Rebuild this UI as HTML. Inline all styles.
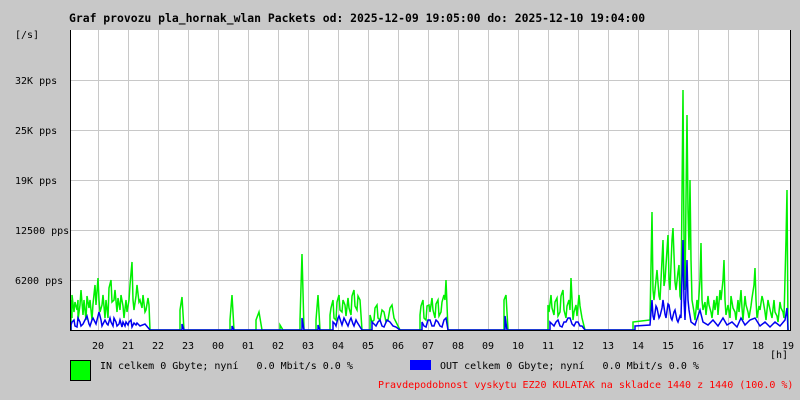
<html><head><style>
body{margin:0;width:800px;height:400px;background:#c8c8c8;font-family:"DejaVu Sans Mono","Liberation Mono",monospace;font-size:10px;color:#000;position:relative;overflow:hidden}
.t{position:absolute;white-space:pre}
</style></head><body>
<div class="t" style="left:69px;top:11px;font-weight:bold;font-size:11.4px">Graf provozu pla_hornak_wlan Packets od: 2025-12-09 19:05:00 do: 2025-12-10 19:04:00</div>
<div class="t" style="left:15px;top:30px">[/s]</div>
<div class="t" style="left:15px;top:76px">32K pps</div>
<div class="t" style="left:15px;top:126px">25K pps</div>
<div class="t" style="left:15px;top:176px">19K pps</div>
<div class="t" style="left:15px;top:226px">12500 pps</div>
<div class="t" style="left:15px;top:276px">6200 pps</div>
<svg style="position:absolute;left:0;top:0" width="800" height="400">
<rect x="70" y="30" width="720" height="300" fill="#fff"/>
<g stroke="#c8c8c8" stroke-width="1">
<path d="M98.5 30V330M128.5 30V330M158.5 30V330M188.5 30V330M218.5 30V330M248.5 30V330M278.5 30V330M308.5 30V330M338.5 30V330M368.5 30V330M398.5 30V330M428.5 30V330M458.5 30V330M488.5 30V330M518.5 30V330M548.5 30V330M578.5 30V330M608.5 30V330M638.5 30V330M668.5 30V330M698.5 30V330M728.5 30V330M758.5 30V330"/>
<path d="M70 80.5H790M70 130.5H790M70 180.5H790M70 230.5H790M70 280.5H790"/>
</g>
<path fill="none" stroke="#00f000" stroke-width="1.5" d="M71 330V300L72 318V295L74 312L75 302L77 310L78 300V320L80 305L81 290L83 315L84 300L86 320L87 296L89 308L90 300L92 320L93 304L95 285L96 305L98 278L99 300L100 312L102 305L103 295L105 318L106 300L108 318L109 288L111 280L112 302L114 300L115 290L117 312L118 298L120 310L121 295L123 306L124 318L126 300L127 312L129 300L130 285L132 262L133 300L134 310L136 296L137 285L139 302L140 300L142 308L143 295L145 312L146 310L148 298L149 305L150 330H180V310L182 297L184 330H230V320L232 295L234 330H256V320L259 312L262 330H280V325L283 330H300V320L302 254L304 330H316V320L318 295L320 330H330V315L331 308L333 300L334 318L336 320L337 302L339 295L340 310L342 312L343 300L345 305L346 316L348 298L349 308L351 315L352 296L354 290L355 306L357 310L358 296L360 300L362 330H370V315L372 322L374 320L375 308L377 305L378 318L380 320L382 310L384 312L386 322L388 320L390 308L392 305L394 318L396 322L400 330H420V315L421 306L423 300L424 318L426 320L427 306L429 305L430 312L432 298L433 310L435 318L436 304L438 300L439 316L441 312L442 302L444 295L445 300L446 280L448 330H504V300L506 295L508 330H548V305L549 312L551 295L552 308L554 315L555 302L557 298L558 316L560 312L561 296L563 290L564 310L566 318L567 306L569 300L570 310L571 278L573 320L574 312L576 305L577 316L579 295L580 306L582 318L585 330H633V322L650 320L652 212L653 290L654 300L656 280L657 270L659 296L660 300L662 260L663 240L664 286L665 280L667 250L668 235L669 280L670 290L672 240L673 228L675 282L676 290L678 272L679 265L680 296L681 300L683 90L684 240L685 290L686 200L687 115L688 210L689 250L690 180L691 260L692 300L694 312L695 320L697 300L698 310L700 280L701 243L702 300L703 310L705 302L706 315L708 296L709 305L711 312L712 318L714 300L715 310L717 296L718 315L720 290L721 300L723 280L724 260L725 300L726 315L728 305L730 318L731 296L733 308L735 312L736 320L738 300L739 312L740 302L741 290L742 308L743 320L745 296L746 305L748 312L749 318L751 306L752 298L754 285L755 268L756 300L757 318L759 306L760 310L762 296L763 300L765 312L766 320L768 300L769 305L771 314L772 318L774 300L775 312L777 316L778 322L780 302L781 308L783 312L784 318L786 240L787 190L788 330"/>
<path fill="none" stroke="#0000f0" stroke-width="1.5" d="M71 330V325L72 322L74 320L75 326L77 327L78 318L80 322L81 326L83 324L84 322L86 318L87 316L89 324L90 326L92 320L93 318L95 322L96 324L98 316L99 312L101 320L102 326L104 322L105 320L107 324L108 325L110 318L111 322L113 326L114 318L116 322L117 326L119 324L120 320L122 327L123 322L125 326L126 322L128 325L129 322L131 320L132 327L134 323L136 325L137 323L140 326L145 324L150 330H182V324L184 330H232V326L234 330H302V318L304 330H318V325L320 330H333V322L335 324L336 326L338 318L339 316L341 322L342 325L344 318L345 320L347 324L348 326L350 320L351 318L353 324L354 326L356 320L357 322L362 330H372V322L374 324L376 326L378 322L380 320L382 326L384 327L387 320L390 322L393 326L396 327L400 330H422V322L424 326L426 327L428 320L430 320L432 326L434 326L436 320L438 322L440 326L442 327L444 320L446 318L448 330H505V316L507 330H550V322L552 324L554 326L556 322L558 320L560 326L562 327L564 322L566 322L568 318L570 318L572 324L574 326L576 322L578 322L580 326L582 326L585 330H635V326L650 325L652 300L653 316L654 320L656 306L657 308L659 318L660 316L662 308L663 300L665 314L666 318L668 304L669 305L671 318L672 320L674 312L675 310L677 320L678 322L680 316L681 318L683 240L684 300L685 320L686 290L687 260L688 300L689 310L691 322L695 325L698 316L700 310L703 322L708 325L713 320L718 326L723 318L727 325L732 322L737 327L741 318L745 325L750 320L755 318L760 326L765 322L770 327L775 322L780 326L785 320L787 308L788 330"/>
<path d="M70.5 30V330.5H790.5V30" fill="none" stroke="#000" stroke-width="1"/>
<rect x="70.5" y="360.5" width="20" height="20" fill="#00ff00" stroke="#000"/>
<rect x="410" y="360" width="21" height="10" fill="#0000ff"/>
</svg>
<div class="t" style="left:92px;top:341px">20</div>
<div class="t" style="left:122px;top:341px">21</div>
<div class="t" style="left:152px;top:341px">22</div>
<div class="t" style="left:182px;top:341px">23</div>
<div class="t" style="left:212px;top:341px">00</div>
<div class="t" style="left:242px;top:341px">01</div>
<div class="t" style="left:272px;top:341px">02</div>
<div class="t" style="left:302px;top:341px">03</div>
<div class="t" style="left:332px;top:341px">04</div>
<div class="t" style="left:362px;top:341px">05</div>
<div class="t" style="left:392px;top:341px">06</div>
<div class="t" style="left:422px;top:341px">07</div>
<div class="t" style="left:452px;top:341px">08</div>
<div class="t" style="left:482px;top:341px">09</div>
<div class="t" style="left:512px;top:341px">10</div>
<div class="t" style="left:542px;top:341px">11</div>
<div class="t" style="left:572px;top:341px">12</div>
<div class="t" style="left:602px;top:341px">13</div>
<div class="t" style="left:632px;top:341px">14</div>
<div class="t" style="left:662px;top:341px">15</div>
<div class="t" style="left:692px;top:341px">16</div>
<div class="t" style="left:722px;top:341px">17</div>
<div class="t" style="left:752px;top:341px">18</div>
<div class="t" style="left:782px;top:341px">19</div>
<div class="t" style="left:770px;top:350px">[h]</div>
<div class="t" style="left:100px;top:361px">IN celkem 0 Gbyte; nyní   0.0 Mbit/s 0.0 %</div>
<div class="t" style="left:440px;top:361px">OUT celkem 0 Gbyte; nyní   0.0 Mbit/s 0.0 %</div>
<div class="t" style="left:378px;top:380px;color:#f00">Pravdepodobnost vyskytu EZ20 KULATAK na skladce 1440 z 1440 (100.0 %)</div>
</body></html>
